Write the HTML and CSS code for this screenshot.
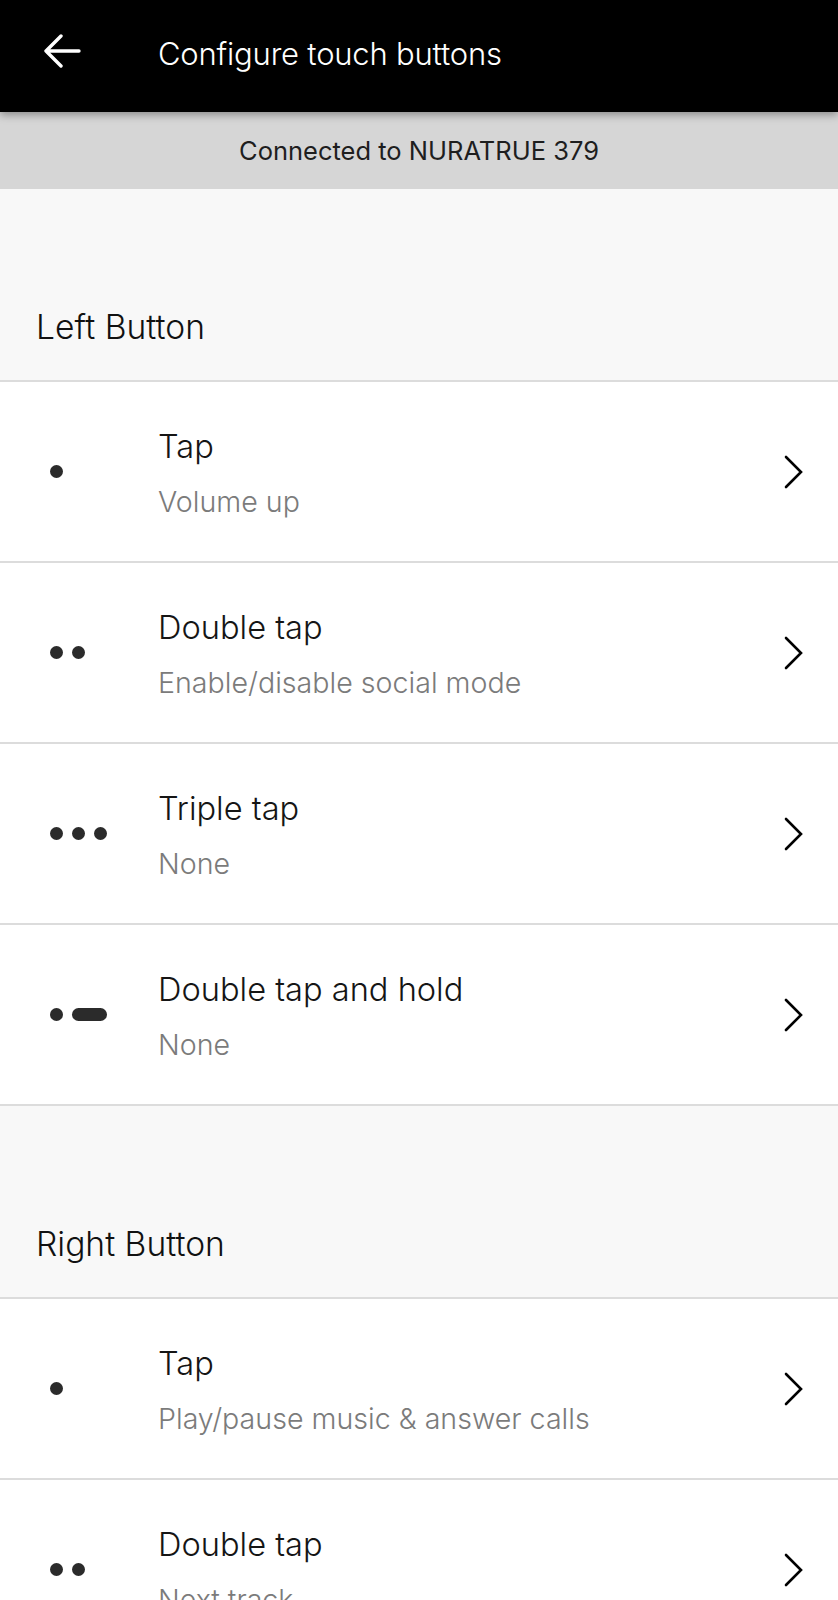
FILE: index.html
```html
<!DOCTYPE html>
<html lang="en">
<head>
    <meta charset="UTF-8">
    <meta name="viewport" content="width=device-width, initial-scale=1.0">
    <title>Configure touch buttons</title>
    <link rel="stylesheet" href="styles.css">
</head>
<body>

    <div class="topbar">
        <a class="back" href="#">
            <svg width="38" height="34" viewBox="0 0 38 34">
                <path d="M18 2 L3 17 L18 32 M3 17 L36 17" fill="none" stroke="#fff" stroke-width="3.4" stroke-linecap="round" stroke-linejoin="round"/>
            </svg>
        </a>
        <h1>Configure touch buttons</h1>
    </div>

    <div class="banner">Connected to NURATRUE 379</div>

    <!-- Left earbud -->
    <div class="section-head">Left Button</div>

    <div class="row">
        <div class="gesture"><span class="dot"></span></div>
        <div class="labels">
            <div class="title">Tap</div>
            <div class="sub">Volume up</div>
        </div>
        <svg class="chev" width="20" height="34" viewBox="0 0 20 34"><path d="M2 2 L17 17 L2 32" fill="none" stroke="#000" stroke-width="2.6" stroke-linecap="round" stroke-linejoin="miter"/></svg>
    </div>

    <div class="row">
        <div class="gesture"><span class="dot"></span><span class="dot"></span></div>
        <div class="labels">
            <div class="title">Double tap</div>
            <div class="sub">Enable/disable social mode</div>
        </div>
        <svg class="chev" width="20" height="34" viewBox="0 0 20 34"><path d="M2 2 L17 17 L2 32" fill="none" stroke="#000" stroke-width="2.6" stroke-linecap="round" stroke-linejoin="miter"/></svg>
    </div>

    <div class="row">
        <div class="gesture"><span class="dot"></span><span class="dot"></span><span class="dot"></span></div>
        <div class="labels">
            <div class="title">Triple tap</div>
            <div class="sub">None</div>
        </div>
        <svg class="chev" width="20" height="34" viewBox="0 0 20 34"><path d="M2 2 L17 17 L2 32" fill="none" stroke="#000" stroke-width="2.6" stroke-linecap="round" stroke-linejoin="miter"/></svg>
    </div>

    <div class="row">
        <div class="gesture"><span class="dot"></span><span class="dash"></span></div>
        <div class="labels">
            <div class="title">Double tap and hold</div>
            <div class="sub">None</div>
        </div>
        <svg class="chev" width="20" height="34" viewBox="0 0 20 34"><path d="M2 2 L17 17 L2 32" fill="none" stroke="#000" stroke-width="2.6" stroke-linecap="round" stroke-linejoin="miter"/></svg>
    </div>

    <!-- Right earbud -->
    <div class="section-head">Right Button</div>

    <div class="row">
        <div class="gesture"><span class="dot"></span></div>
        <div class="labels">
            <div class="title">Tap</div>
            <div class="sub">Play/pause music &amp; answer calls</div>
        </div>
        <svg class="chev" width="20" height="34" viewBox="0 0 20 34"><path d="M2 2 L17 17 L2 32" fill="none" stroke="#000" stroke-width="2.6" stroke-linecap="round" stroke-linejoin="miter"/></svg>
    </div>

    <div class="row">
        <div class="gesture"><span class="dot"></span><span class="dot"></span></div>
        <div class="labels">
            <div class="title">Double tap</div>
            <div class="sub">Next track</div>
        </div>
        <svg class="chev" width="20" height="34" viewBox="0 0 20 34"><path d="M2 2 L17 17 L2 32" fill="none" stroke="#000" stroke-width="2.6" stroke-linecap="round" stroke-linejoin="miter"/></svg>
    </div>

</body>
</html>
```

FILE: styles.css
```css
body {
    font-family: Inter, "Noto Sans", sans-serif;
    background-color: #f8f8f8;
    margin: 0;
    color: #111;
}

.topbar {
    position: relative;
    z-index: 2;
    height: 112px;
    background-color: #000;
    display: flex;
    align-items: center;
    box-shadow: 0 3px 8px rgba(0, 0, 0, 0.35);
}

.back {
    display: flex;
    width: 158px;
    padding-left: 43px;
    box-sizing: border-box;
    margin-top: -10px;
}

.topbar h1 {
    margin: -6px 0 0 0;
    color: #fff;
    font-size: 31px;
    font-weight: 300;
    letter-spacing: -0.2px;
}

.banner {
    height: 77px;
    background-color: #d6d6d6;
    display: flex;
    justify-content: center;
    align-items: center;
    font-size: 25.5px;
    font-weight: 420;
    color: #1e1e1e;
}

.section-head {
    height: 191px;
    border-bottom: 2px solid #dcdcdc;
    display: flex;
    align-items: flex-end;
    padding-left: 36px;
    font-size: 33.6px;
    font-weight: 300;
    line-height: 106px;
}

.row {
    height: 179px;
    background-color: #fff;
    border-bottom: 2px solid #dcdcdc;
    display: flex;
    align-items: center;
}

.gesture {
    width: 108px;
    padding-left: 50px;
    display: flex;
    align-items: center;
    gap: 9px;
}

.dot {
    width: 13px;
    height: 13px;
    border-radius: 50%;
    background-color: #2b2b2b;
}

.dash {
    width: 35px;
    height: 13px;
    border-radius: 7px;
    background-color: #2b2b2b;
}

.labels {
    flex: 1;
    display: flex;
    flex-direction: column;
    gap: 18px;
    margin-top: 2px;
}

.title {
    font-size: 32.6px;
    font-weight: 300;
    line-height: 40px;
    color: #151515;
}

.sub {
    font-size: 28.6px;
    font-weight: 300;
    line-height: 36px;
    color: #7b7b7b;
}

.chev {
    margin-right: 34px;
}
```
